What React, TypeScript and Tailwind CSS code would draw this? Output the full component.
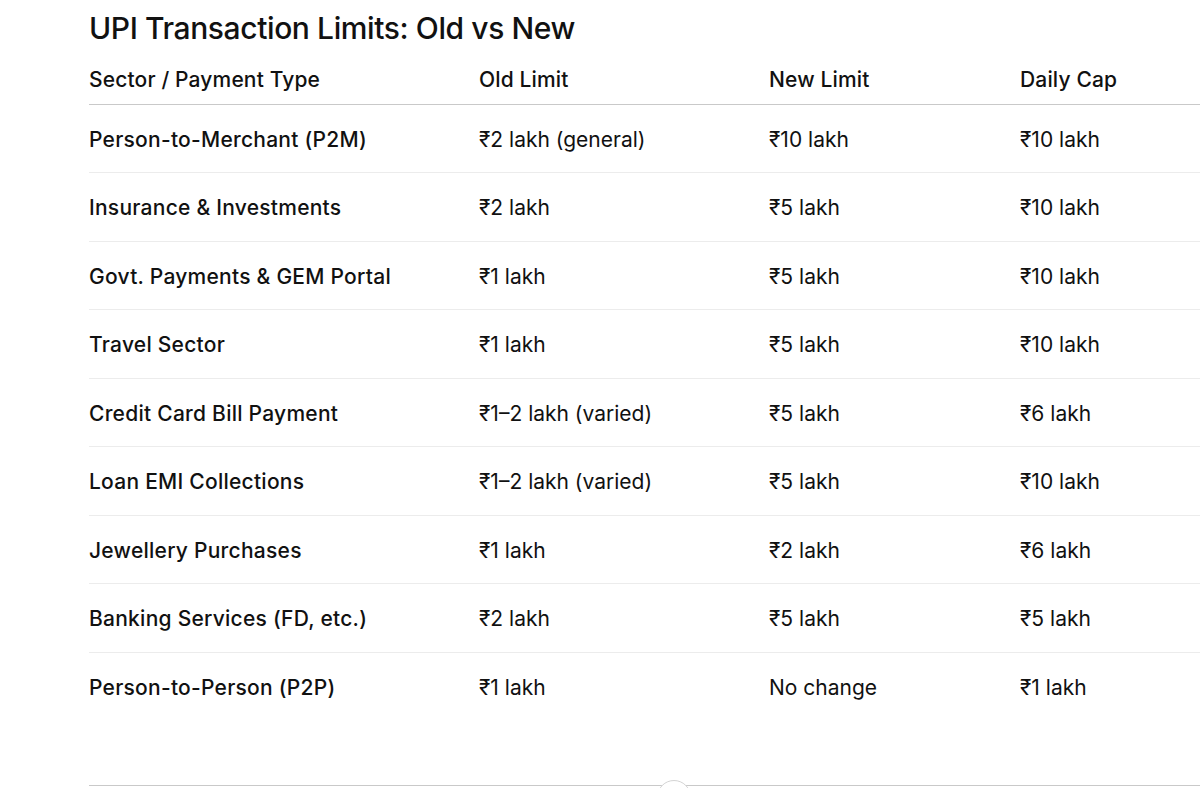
const rows = [
  ["Person-to-Merchant (P2M)", "₹2 lakh (general)", "₹10 lakh", "₹10 lakh"],
  ["Insurance & Investments", "₹2 lakh", "₹5 lakh", "₹10 lakh"],
  ["Govt. Payments & GEM Portal", "₹1 lakh", "₹5 lakh", "₹10 lakh"],
  ["Travel Sector", "₹1 lakh", "₹5 lakh", "₹10 lakh"],
  ["Credit Card Bill Payment", "₹1–2 lakh (varied)", "₹5 lakh", "₹6 lakh"],
  ["Loan EMI Collections", "₹1–2 lakh (varied)", "₹5 lakh", "₹10 lakh"],
  ["Jewellery Purchases", "₹1 lakh", "₹2 lakh", "₹6 lakh"],
  ["Banking Services (FD, etc.)", "₹2 lakh", "₹5 lakh", "₹5 lakh"],
  ["Person-to-Person (P2P)", "₹1 lakh", "No change", "₹1 lakh"],
];

export default function App() {
  return (
    <div className="w-[1200px] h-[788px] overflow-hidden bg-white text-[#111] relative" style={{ fontFamily: "Inter, 'Noto Sans', sans-serif" }}>
      <div className="pl-[89px]">
        <h1 className="text-[30px] font-medium tracking-[-0.4px] pt-[9px] leading-[38px]">UPI Transaction Limits: Old vs New</h1>
        <table className="mt-[9px] w-[1200px] border-collapse text-[21px]">
          <thead>
            <tr className="border-b border-[#c9c9c9]">
              <th className="w-[390px] text-left font-medium tracking-[0.15px] h-[48px] align-middle">Sector / Payment Type</th>
              <th className="w-[290px] text-left font-medium tracking-[0.15px]">Old Limit</th>
              <th className="w-[251px] text-left font-medium tracking-[0.15px]">New Limit</th>
              <th className="text-left font-medium tracking-[0.15px]">Daily Cap</th>
            </tr>
          </thead>
          <tbody>
            {rows.map((r, i) => (
              <tr key={i} className={i < rows.length - 1 ? "border-b border-[#ececec]" : ""}>
                <td className="h-[68.5px] pt-[2px] font-medium tracking-[0.25px]">{r[0]}</td>
                <td className="pt-[2px] font-normal">{r[1]}</td>
                <td className="pt-[2px] font-normal">{r[2]}</td>
                <td className="pt-[2px] font-normal">{r[3]}</td>
              </tr>
            ))}
          </tbody>
        </table>
      </div>
      <div className="absolute left-[89px] right-0 top-[785px] border-t border-[#c9c9c9]" />
      <div className="absolute left-[657px] top-[780px] w-[34px] h-[34px] rounded-full border border-[#d4d4d4] bg-white" />
    </div>
  );
}
